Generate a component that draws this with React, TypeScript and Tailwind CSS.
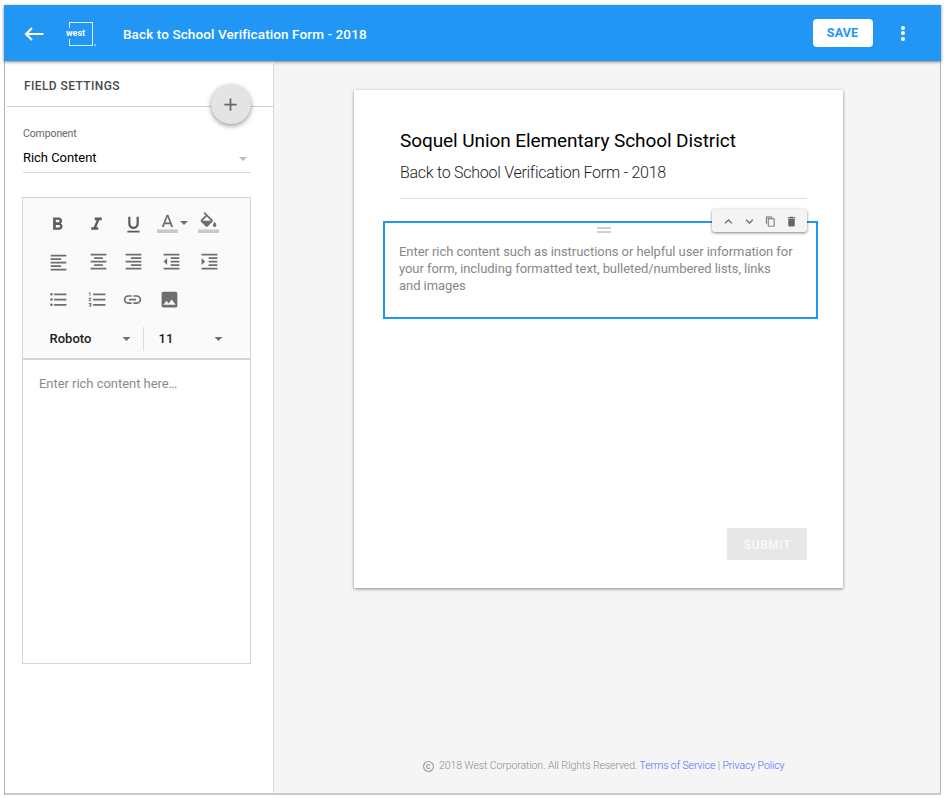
import React from "react";

const paths = {
  bold: "M15.6 10.79c.97-.67 1.65-1.77 1.65-2.79 0-2.26-1.75-4-4-4H7v14h7.04c2.09 0 3.71-1.7 3.71-3.79 0-1.52-.86-2.82-2.15-3.42zM10 6.5h3c.83 0 1.5.67 1.5 1.5s-.67 1.5-1.5 1.5h-3v-3zm3.5 9H10v-3h3.5c.83 0 1.5.67 1.5 1.5s-.67 1.5-1.5 1.5z",
  italic: "M10 4v3h2.21l-3.42 8H6v3h8v-3h-2.21l3.42-8H18V4z",
  underline: "M12 17c3.31 0 6-2.69 6-6V3h-2.5v8c0 1.93-1.57 3.5-3.5 3.5S8.5 12.93 8.5 11V3H6v8c0 3.31 2.69 6 6 6zm-7 2v2h14v-2H5z",
  color: "M11 3L5.5 17h2.25l1.12-3h6.25l1.12 3h2.25L13 3h-2zm-1.38 9L12 5.67 14.38 12H9.62z",
  fill: "M16.56 8.94L7.62 0 6.21 1.41l2.38 2.38-5.15 5.15c-.59.59-.59 1.54 0 2.12l5.5 5.5c.29.29.68.44 1.06.44s.77-.15 1.06-.44l5.5-5.5c.59-.58.59-1.53 0-2.12zM5.21 10L10 5.21 14.79 10H5.21zM19 11.5s-2 2.17-2 3.5c0 1.1.9 2 2 2s2-.9 2-2c0-1.33-2-3.5-2-3.5z",
  alignLeft: "M15 15H3v2h12v-2zm0-8H3v2h12V7zM3 13h18v-2H3v2zm0 8h18v-2H3v2zM3 3v2h18V3H3z",
  alignCenter: "M7 15v2h10v-2H7zm-4 6h18v-2H3v2zm0-8h18v-2H3v2zm4-6v2h10V7H7zM3 3v2h18V3H3z",
  alignRight: "M3 21h18v-2H3v2zm6-4h12v-2H9v2zm-6-4h18v-2H3v2zm6-4h12V7H9v2zM3 3v2h18V3H3z",
  outdent: "M11 17h10v-2H11v2zm-8-5l4 4V8l-4 4zm0 9h18v-2H3v2zM3 3v2h18V3H3zm8 6h10V7H11v2zm0 4h10v-2H11v2z",
  indent: "M3 21h18v-2H3v2zM3 8v8l4-4-4-4zm8 9h10v-2H11v2zM3 3v2h18V3H3zm8 6h10V7H11v2zm0 4h10v-2H11v2z",
  bullets: "M4 10.5c-.83 0-1.5.67-1.5 1.5s.67 1.5 1.5 1.5 1.5-.67 1.5-1.5-.67-1.5-1.5-1.5zm0-6c-.83 0-1.5.67-1.5 1.5S3.17 7.5 4 7.5 5.5 6.83 5.5 6 4.83 4.5 4 4.5zm0 12c-.83 0-1.5.68-1.5 1.5s.68 1.5 1.5 1.5 1.5-.68 1.5-1.5-.67-1.5-1.5-1.5zM7 19h14v-2H7v2zm0-6h14v-2H7v2zm0-8v2h14V5H7z",
  numbers: "M2 17h2v.5H3v1h1v.5H2v1h3v-4H2v1zm1-9h1V4H2v1h1v3zm-1 3h1.8L2 13.1v.9h3v-1H3.2L5 10.9V10H2v1zm5-6v2h14V5H7zm0 14h14v-2H7v2zm0-6h14v-2H7v2z",
  link: "M3.9 12c0-1.71 1.39-3.1 3.1-3.1h4V7H7c-2.76 0-5 2.24-5 5s2.24 5 5 5h4v-1.9H7c-1.71 0-3.1-1.39-3.1-3.1zM8 13h8v-2H8v2zm9-6h-4v1.9h4c1.71 0 3.1 1.39 3.1 3.1s-1.39 3.1-3.1 3.1h-4V17h4c2.76 0 5-2.24 5-5s-2.24-5-5-5z",
  image: "M21 19V5c0-1.1-.9-2-2-2H5c-1.1 0-2 .9-2 2v14c0 1.1.9 2 2 2h14c1.1 0 2-.9 2-2zM8.5 13.5l2.5 3.01L14.5 12l4.5 6H5l3.5-4.5z",
  up: "M12 8l-6 6 1.41 1.41L12 10.83l4.59 4.58L18 14z",
  down: "M16.59 8.59L12 13.17 7.41 8.59 6 10l6 6 6-6z",
  copy: "M16 1H4c-1.1 0-2 .9-2 2v14h2V3h12V1zm3 4H8c-1.1 0-2 .9-2 2v14c0 1.1.9 2 2 2h11c1.1 0 2-.9 2-2V7c0-1.1-.9-2-2-2zm0 16H8V7h11v14z",
  trash: "M6 19c0 1.1.9 2 2 2h8c1.1 0 2-.9 2-2V7H6v12zM19 4h-3.5l-1-1h-5l-1 1H5v2h14V4z",
  plus: "M19 13h-6v6h-2v-6H5v-2h6V5h2v6h6v2z",
};

function Icon({ name, className = "" }: { name: keyof typeof paths; className?: string }) {
  return (
    <svg viewBox="0 0 24 24" fill="currentColor" className={`shrink-0 overflow-visible ${className}`}>
      <path d={paths[name]} />
      {(name === "color" || name === "fill") && <path d="M0 20h24v4H0z" fill="#c9c9c9" />}
    </svg>
  );
}

function Caret({ className = "" }: { className?: string }) {
  return (
    <svg viewBox="0 0 10 5" fill="currentColor" className={`shrink-0 ${className}`}>
      <path d="M0 0h10L5 5z" />
    </svg>
  );
}

function Header() {
  return (
    <header className="relative z-10 flex h-14 items-center bg-[#2196f5] text-white shadow-[0_1px_3px_rgba(0,0,0,0.5)]">
      <svg viewBox="0 0 20 14" className="ml-[20px] mt-px h-[14px] w-5 shrink-0" fill="none" stroke="white" strokeWidth="2.1">
        <path d="M19.5 7H2M8 1L2 7l6 6" />
      </svg>
      <div className="relative ml-[25px] mt-[2px] h-6 w-6 border border-white/85">
        <span className="absolute -left-[4px] top-[5px] bg-[#2196f5] text-[9px] font-bold leading-[11px] text-white">west</span>
        <span className="absolute -right-[4px] bottom-[-1px] h-[2px] w-[2px] rounded-full bg-white/60" />
      </div>
      <h1 className="ml-[30px] mt-px whitespace-nowrap text-[13.5px] font-medium leading-5 tracking-[0.1px]">Back to School Verification Form - 2018</h1>
      <button className="ml-auto mb-px h-7 w-[60px] rounded-[4px] bg-white pt-[2px] text-[12.5px] font-bold tracking-[0.15px] text-[#2196f5]">SAVE</button>
      <div className="ml-[28.5px] mr-9 flex w-1 flex-col gap-[1.5px]">
        <i className="h-1 w-1 rounded-full bg-white" />
        <i className="h-1 w-1 rounded-full bg-white" />
        <i className="h-1 w-1 rounded-full bg-white" />
      </div>
    </header>
  );
}

function Editor() {
  return (
    <section className="ml-[17px] mt-[24px] h-[467px] w-[229px] border border-[#d4d4d4] bg-white">
      <div className="flex h-[162px] flex-col border-b-2 border-[#d4d4d4] bg-[#fafafa] text-[#6e6e6e]">
        <div className="mt-[14px] flex h-[21px] pl-[24px]">
          <Icon name="bold" className="mt-[2px] h-[21px] w-[21px] text-[#5c5c5c]" />
          <Icon name="italic" className="ml-[17.5px] mt-[2px] h-[21px] w-[21px] text-[#5c5c5c]" />
          <Icon name="underline" className="ml-[16.5px] mt-[2px] h-[21px] w-[21px] text-[#5c5c5c]" />
          <Icon name="color" className="ml-[13px] h-[21px] w-[21px]" />
          <Caret className="ml-[2px] mt-[9px] h-1 w-2" />
          <Icon name="fill" className="ml-[10px] h-[21px] w-[21px]" />
        </div>
        <div className="mt-[18px] flex h-[21px] pl-[24.6px]">
          <Icon name="alignLeft" className="mt-px h-[21px] w-[21px]" />
          <Icon name="alignCenter" className="ml-[19.4px] h-[21px] w-[21px]" />
          <Icon name="alignRight" className="ml-[14.3px] h-[21px] w-[21px]" />
          <Icon name="outdent" className="ml-[16.7px] h-[21px] w-[21px]" />
          <Icon name="indent" className="ml-[16.7px] h-[21px] w-[21px]" />
        </div>
        <div className="mt-[17px] flex h-[21px] pl-[24.7px]">
          <Icon name="bullets" className="h-[21px] w-[21px]" />
          <Icon name="numbers" className="ml-[18.4px] h-[21px] w-[21px]" />
          <Icon name="link" className="ml-[14.2px] h-[21px] w-[21px]" />
          <Icon name="image" className="ml-[15.8px] h-[21px] w-[21px]" />
        </div>
        <div className="mt-[17px] flex h-6 items-center pl-[26.5px] text-[13px] font-medium tracking-[0.02px] text-[#1c1c1c]">
          <span className="-mt-px w-[72px]">Roboto</span>
          <Caret className="h-1 w-[9px] text-[#6e6e6e]" />
          <i className="ml-3 h-6 w-px bg-[#dcdcdc]" />
          <span className="-mt-px ml-[15px] w-[55px]">11</span>
          <Caret className="h-1 w-[9px] text-[#6e6e6e]" />
        </div>
      </div>
      <p className="ml-4 mt-[14px] text-[13px] leading-5 tracking-[-0.04px] text-[#8b8b8b]">Enter rich content here…</p>
    </section>
  );
}

function Sidebar() {
  return (
    <aside className="w-[269px] shrink-0 bg-white pt-[3px]">
      <div className="h-[728px] border-r border-[#d6d6d6]">
        <div className="relative ml-[2px] h-[43px] border-b border-[#cfcfcf]">
          <h2 className="pl-[17px] pt-[12px] text-[12px] font-medium leading-5 tracking-[0.4px] text-[#4a4a4a]">FIELD SETTINGS</h2>
          <button className="absolute right-[22.5px] top-5 flex h-10 w-10 items-center justify-center rounded-full bg-[#e4e4e4] text-[#666] shadow-[0_2px_5px_rgba(0,0,0,0.4)]">
            <Icon name="plus" className="mr-px h-[21px] w-[21px]" />
          </button>
        </div>
        <div className="ml-[18px] mt-[18px] h-[48px] w-[228px] border-b border-[#dcdcdc]">
          <div className="pt-px text-[10.5px] leading-4 tracking-[-0.1px] text-[#666]">Component</div>
          <div className="mt-[6px] flex items-center justify-between pr-1 text-[13px] leading-5 tracking-[-0.04px] text-black">
            <span>Rich Content</span>
            <Caret className="mt-[2px] h-1 w-2 text-[#bcbcbc]" />
          </div>
        </div>
        <Editor />
      </div>
    </aside>
  );
}

function FormCard() {
  return (
    <article className="flex h-[498px] w-[489px] flex-col bg-white pl-[46px] pr-[36px] pt-[39px] shadow-[0_1px_3px_rgba(0,0,0,0.45)]">
      <h2 className="whitespace-nowrap text-[19px] leading-6 tracking-[-0.08px] text-black">Soquel Union Elementary School District</h2>
      <h3 className="mt-[9px] whitespace-nowrap text-[16px] font-light leading-[22px] tracking-[-0.27px] text-[#1c1c1c]">Back to School Verification Form - 2018</h3>
      <div className="mt-[14px] h-px w-[407px] bg-[#dedede]" />
      <div className="relative -ml-[17px] mt-[22px] h-[98px] w-[435px] border-2 border-[#2196f5] pl-[14px] pt-[20px]">
        <div className="absolute left-[212px] top-1 h-[6px] w-[14px] border-y-2 border-[#d0d0d0]" />
        <p className="whitespace-nowrap text-[13px] leading-[17px] tracking-[-0.06px] text-[#888]">
          Enter rich content such as instructions or helpful user information for<br />
          your form, including formatted text, bulleted/numbered lists, links<br />
          and images
        </p>
        <div className="absolute right-[9px] top-[-14px] flex h-[23px] w-[95px] items-center rounded-[3px] bg-[#f4f4f4] text-[#666] shadow-[0_1px_3px_rgba(0,0,0,0.5)]">
          <Icon name="up" className="ml-[9px] mt-px h-[15px] w-[15px]" />
          <Icon name="down" className="ml-[6px] mt-px h-[15px] w-[15px]" />
          <Icon name="copy" className="ml-[8px] mt-px h-[11px] w-[11px]" />
          <Icon name="trash" className="ml-[9px] mt-px h-[13px] w-[13px]" />
        </div>
      </div>
      <button className="ml-[327px] mt-[209px] h-8 w-20 rounded-[2px] bg-[#e7e7e7] pt-px pl-px text-[12px] font-medium tracking-[0.6px] text-[#fafafa]">SUBMIT</button>
    </article>
  );
}

export default function App() {
  return (
    <div className="h-[798px] w-[948px] overflow-hidden bg-white pl-1 pt-[5px] font-['Roboto','Liberation_Sans',sans-serif]">
      <div className="w-[937px]">
        <Header />
        <div className="flex h-[734px] border-b-2 border-l border-r border-b-[#cbcbcb] border-l-[#b4b4b4] border-r-[#b4b4b4] bg-[#f5f5f5]">
          <Sidebar />
          <main className="flex grow flex-col pl-[80px] pt-[29px]">
            <FormCard />
            <footer className="ml-[69px] mt-[168px] flex h-5 items-center whitespace-nowrap text-[10.5px] font-light tracking-[-0.1px] text-[#8c8c8c]">
              <svg viewBox="0 0 12 12" className="mr-[5px] h-[11px] w-[11px]" fill="none" stroke="#a0a0a0" strokeWidth="1.2">
                <circle cx="6" cy="6" r="5.4" />
                <path d="M7.9 4.7A2.2 2.2 0 1 0 7.9 7.3" />
              </svg>
              <span>2018 West Corporation. All RIghts Reserved. <a className="text-[#5468ff]">Terms of Service</a> | <a className="text-[#5468ff]">Privacy Policy</a></span>
            </footer>
          </main>
        </div>
      </div>
    </div>
  );
}
